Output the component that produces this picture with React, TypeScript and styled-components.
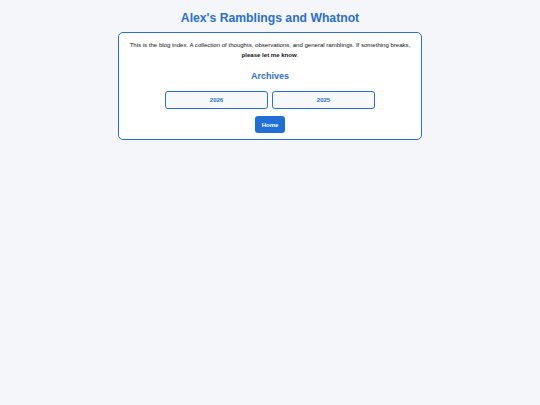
import React from "react";
import styled, { createGlobalStyle } from "styled-components";

const Global = createGlobalStyle`
  html, body { margin: 0; padding: 0; background: #f4f6f9; }
  body { font-family: "Liberation Sans", Arial, sans-serif; color: #111; }
`;

const Page = styled.div`
  display: flex;
  flex-direction: column;
  align-items: center;
  padding-top: 10px;
`;

const Title = styled.h1`
  margin: 0 0 6px;
  font-size: 12.2px;
  line-height: 16px;
  font-weight: 700;
  color: #2a6fd3;
`;

const Card = styled.main`
  box-sizing: border-box;
  width: 304px;
  background: #fff;
  border: 1px solid #2a6fd3;
  border-radius: 5px;
  padding: 7px 10px 6px;
  display: flex;
  flex-direction: column;
  align-items: center;
`;

const Intro = styled.p`
  margin: 0;
  font-size: 6.05px;
  line-height: 10px;
  text-align: center;
  color: #111;
  strong { font-weight: 700; }
`;

const Heading = styled.h2`
  margin: 11px 0 9px;
  font-size: 9px;
  line-height: 11px;
  font-weight: 700;
  color: #2a6fd3;
`;

const ArchiveGrid = styled.div`
  display: grid;
  grid-template-columns: 103px 103px;
  gap: 4px;
`;

const ArchiveButton = styled.a`
  box-sizing: border-box;
  height: 18px;
  display: flex;
  align-items: center;
  justify-content: center;
  background: #f6f8fa;
  border: 1px solid #2a6fd3;
  border-radius: 3px;
  font-size: 6px;
  font-weight: 700;
  color: #2a6fd3;
  text-decoration: none;
`;

const HomeButton = styled.a`
  box-sizing: border-box;
  margin-top: 7px;
  height: 17px;
  padding: 0 7px;
  display: flex;
  align-items: center;
  justify-content: center;
  background: #1f6fd6;
  border-radius: 3px;
  font-size: 6px;
  font-weight: 700;
  color: #fff;
  text-decoration: none;
`;

export default function App() {
  return (
    <>
      <Global />
      <Page>
        <Title>Alex's Ramblings and Whatnot</Title>
        <Card>
          <Intro>
            This is the blog index. A collection of thoughts, observations, and general ramblings. If something breaks,{" "}
            <strong>please let me know</strong>.
          </Intro>
          <Heading>Archives</Heading>
          <ArchiveGrid>
            <ArchiveButton href="#">2026</ArchiveButton>
            <ArchiveButton href="#">2025</ArchiveButton>
          </ArchiveGrid>
          <HomeButton href="#">Home</HomeButton>
        </Card>
      </Page>
    </>
  );
}
